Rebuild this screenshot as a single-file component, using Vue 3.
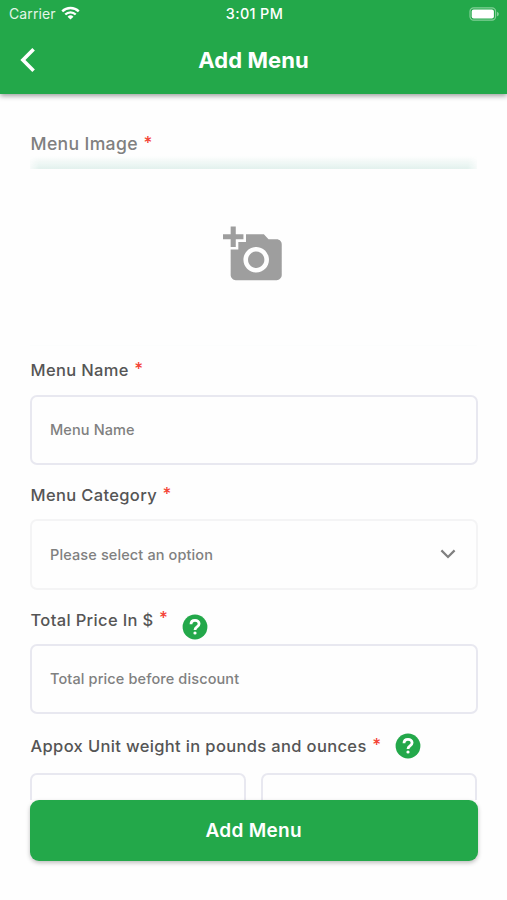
<script setup>
const cameraPath =
  'M3 4V1h2v3h3v2H5v3H3V6H0V4h3zm3 6V7h3V4h7l1.83 2H21c1.1 0 2 .9 2 2v12c0 1.1-.9 2-2 2H5c-1.1 0-2-.9-2-2V10h3zm7 9c2.76 0 5-2.24 5-5s-2.24-5-5-5-5 2.24-5 5 2.24 5 5 5zm-3.2-5c0 1.77 1.43 3.2 3.2 3.2s3.2-1.43 3.2-3.2-1.43-3.2-3.2-3.2-3.2 1.43-3.2 3.2z'
</script>

<template>
  <div class="screen">
    <header class="header">
      <div class="status">
        <div class="carrier">
          <span class="carrier-name">Carrier</span>
          <svg class="wifi" viewBox="0 0 20 15">
            <path d="M1.3 5.6a12.3 12.3 0 0 1 17.4 0" />
            <path d="M4.5 8.8a7.8 7.8 0 0 1 11 0" />
            <path class="dot" d="M6.9 11.1a4.4 4.4 0 0 1 6.2 0L10 14.2z" />
          </svg>
        </div>
        <span class="time">3:01 PM</span>
        <svg class="battery" viewBox="0 0 31 14">
          <rect class="case" x="1" y="0.8" width="25.6" height="12.4" rx="3.6" />
          <rect x="2.7" y="2.4" width="22.2" height="9.2" rx="2" />
          <path class="tip" d="M28 4.7c2.4.8 2.4 3.8 0 4.6z" />
        </svg>
      </div>
      <div class="nav">
        <svg class="back" viewBox="0 0 18 26">
          <path d="M14.6 2.2 3.9 13 14.6 23.8" />
        </svg>
        <h1 class="title">Add Menu</h1>
      </div>
    </header>

    <main class="form">
      <div class="label soft image-label"><span>Menu Image</span><i>*</i></div>
      <div class="strip"></div>
      <div class="picker">
        <svg viewBox="0 0 24 24"><path :d="cameraPath" /></svg>
      </div>

      <div class="label name-label"><span>Menu Name</span><i>*</i></div>
      <div class="field"><span>Menu Name</span></div>

      <div class="label category-label"><span>Menu Category</span><i>*</i></div>
      <div class="field select">
        <span>Please select an option</span>
        <svg class="chevron" viewBox="0 0 16 10"><path d="M1.4 1.4 8 8l6.6-6.6" /></svg>
      </div>

      <div class="label price-label">
        <span>Total Price In $</span><i>*</i>
        <svg class="help low" viewBox="0 0 26 26">
          <circle cx="13" cy="13" r="12.4" />
          <path d="M9 10.2C9 7.6 10.7 6.3 13 6.3s4.1 1.4 4.1 3.5c0 3.2-4.1 3-4.1 6.1" />
          <circle class="point" cx="13" cy="19" r="1.6" />
        </svg>
      </div>
      <div class="field"><span>Total price before discount</span></div>

      <div class="label weight-label">
        <span>Appox Unit weight in pounds and ounces</span><i>*</i>
        <svg class="help" viewBox="0 0 26 26">
          <circle cx="13" cy="13" r="12.4" />
          <path d="M9 10.2C9 7.6 10.7 6.3 13 6.3s4.1 1.4 4.1 3.5c0 3.2-4.1 3-4.1 6.1" />
          <circle class="point" cx="13" cy="19" r="1.6" />
        </svg>
      </div>
      <div class="pair">
        <div class="field"></div>
        <div class="field"></div>
      </div>
    </main>

    <footer class="footer">
      <button class="submit">Add Menu</button>
    </footer>
  </div>
</template>

<style>
body {
  background: #fefefe;
}
</style>

<style scoped>
.screen {
  display: flex;
  flex-direction: column;
  width: 507px;
  height: 900px;
  overflow: hidden;
  background: #fefefe;
  color: #555;
  font-family: Inter, "Liberation Sans", sans-serif;
}
.header {
  flex: none;
  height: 94px;
  background: #23a84a;
  color: #fff;
  box-shadow: 0 2px 5px rgba(0, 0, 0, 0.38);
  z-index: 1;
}
.status {
  display: grid;
  grid-template-columns: 1fr auto 1fr;
  align-items: center;
  height: 27px;
  padding: 0 7px 0 9px;
}
.carrier {
  display: flex;
  align-items: center;
  gap: 5px;
}
.carrier-name {
  font-size: 14px;
  letter-spacing: 0.1px;
  color: #e4f5e8;
}
.wifi {
  width: 19px;
  height: 14.5px;
  fill: none;
  stroke: #fff;
  stroke-width: 2.5;
}
.wifi .dot {
  fill: #fff;
  stroke: none;
}
.time {
  font-size: 14.4px;
  font-weight: 500;
  letter-spacing: 0.35px;
}
.battery {
  justify-self: end;
  width: 31px;
  height: 14px;
  fill: #fff;
}
.battery .case {
  fill: none;
  stroke: #83cf98;
  stroke-width: 1.2;
}
.battery .tip {
  fill: #83cf98;
}
.nav {
  display: grid;
  grid-template-columns: 1fr auto 1fr;
  align-items: center;
  height: 66px;
  padding: 0 19px;
}
.back {
  width: 18px;
  height: 26px;
  fill: none;
  stroke: #fff;
  stroke-width: 3.6;
}
.title {
  margin: 0;
  font-size: 22px;
  font-weight: 700;
  line-height: 28px;
  letter-spacing: 0.1px;
}
.form {
  flex: none;
  box-sizing: border-box;
  height: 706px;
  padding: 0 30px;
  overflow: hidden;
}
.label {
  display: flex;
  align-items: center;
  font-size: 16.5px;
  font-weight: 500;
  line-height: 24px;
  letter-spacing: 0.35px;
  padding-left: 0.5px;
  white-space: nowrap;
}
.label i {
  margin: -3px 0 0 5.5px;
  color: #f44336;
  font-size: 17px;
  font-style: normal;
}
.soft {
  color: #808080;
}
.image-label {
  height: 24px;
  padding-top: 38px;
  font-size: 17.6px;
}
.strip {
  height: 13px;
  background: linear-gradient(to bottom, rgba(226, 241, 237, 0), #e2f1ed);
  mask-image: linear-gradient(to right, rgba(0, 0, 0, 0.25), #000 9px, #000 calc(100% - 9px), rgba(0, 0, 0, 0.25));
}
.picker {
  display: flex;
  justify-content: center;
  height: 177px;
  padding-top: 55px;
  box-sizing: border-box;
  border-bottom: 1px solid #fcfdfd;
}
.picker svg {
  width: 61.3px;
  height: 61.3px;
  fill: #9e9e9e;
}
.name-label {
  height: 48.5px;
}
.category-label,
.price-label {
  height: 54px;
  padding-top: 6px;
  box-sizing: border-box;
}
.weight-label {
  height: 59px;
  padding-top: 5px;
  box-sizing: border-box;
}
.help {
  width: 26px;
  height: 26px;
  margin-left: 14px;
  fill: #23a84a;
}
.help.low {
  margin-top: 14px;
}
.help path {
  fill: none;
  stroke: #fff;
  stroke-width: 2.8;
}
.help .point {
  fill: #fff;
}
.field {
  display: flex;
  align-items: center;
  justify-content: space-between;
  box-sizing: border-box;
  width: 447.5px;
  height: 70.5px;
  padding: 0 20px 0 18px;
  border: 2px solid #e8e8f0;
  border-radius: 7px;
  color: #808080;
  font-size: 14.5px;
  font-weight: 500;
  letter-spacing: 0.12px;
}
.select {
  border-color: #f4f4f5;
}
.chevron {
  width: 16px;
  height: 10px;
  fill: none;
  stroke: #808080;
  stroke-width: 2.2;
}
.pair {
  display: flex;
  gap: 15px;
}
.pair .field {
  width: 216.2px;
}
.footer {
  flex: none;
  padding: 0 29.5px 0 30px;
}
.submit {
  display: block;
  width: 100%;
  height: 61px;
  padding: 0;
  border: 0;
  border-radius: 9px;
  background: #23a84a;
  color: #fff;
  font: 600 19px/61px Inter, "Liberation Sans", sans-serif;
  letter-spacing: 0.3px;
  box-shadow: 0 2px 4px rgba(0, 0, 0, 0.25);
}
</style>
